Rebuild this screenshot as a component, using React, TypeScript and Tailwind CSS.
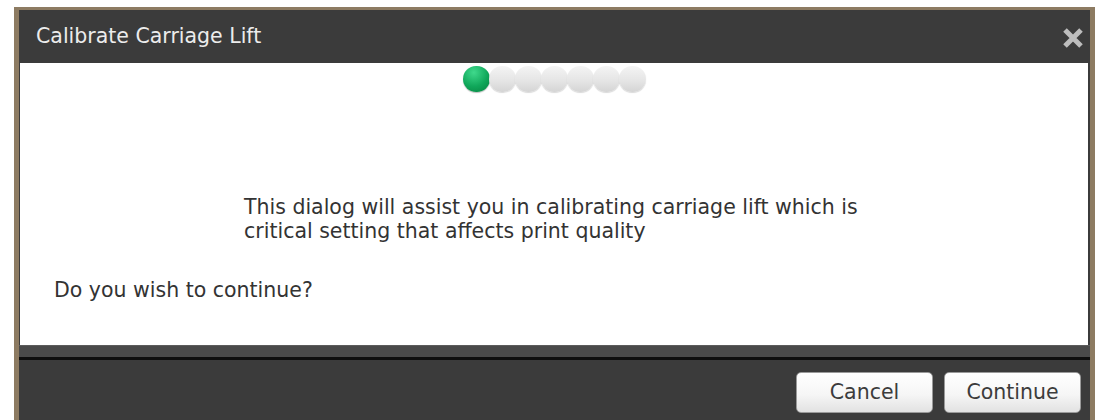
import React from "react";

const steps = [true, false, false, false, false, false, false];

const StepDot = ({ active }: { active: boolean }) => (
  <div
    className={
      active
        ? "w-[27px] h-[26px] -mr-[1px] rounded-full bg-[radial-gradient(circle_at_40%_25%,_#3fd98c_0%,_#10a75a_55%,_#07803f_100%)] shadow-[0_1px_1px_rgba(0,0,0,0.25)]"
        : "w-[27px] h-[26px] -mr-[1px] rounded-full bg-[linear-gradient(to_bottom,_#f4f4f4_0%,_#e4e4e4_60%,_#d4d4d4_100%)] shadow-[0_1px_1px_rgba(0,0,0,0.15)]"
    }
  />
);

const DialogButton = ({ label }: { label: string }) => (
  <button className="w-[137px] h-[41px] rounded-[5px] border border-[#9a9a9a] bg-[linear-gradient(to_bottom,_#ffffff_0%,_#f6f6f6_55%,_#e2e2e2_100%)] text-[20.5px] text-[#3c3c3c]">
    {label}
  </button>
);

export default function App() {
  return (
    <div
      className="w-[1096px] h-[420px] overflow-hidden bg-white pt-[7px] pl-[14px] pr-[1px]"
      style={{ fontFamily: '"DejaVu Sans", "Liberation Sans", sans-serif' }}
    >
      <div className="h-[440px] border-l-[5px] border-t-[3px] border-r-[5px] border-[#8d7b62] bg-[#3b3b3b] flex flex-col">
        {/* title bar */}
        <div className="h-[53px] flex items-center justify-between pl-[17px] pr-[6px]">
          <span className="text-[20.5px] text-[#ececec]">Calibrate Carriage Lift</span>
          <svg width="22" height="22" viewBox="0 0 22 22" className="mt-[2px]">
            <path d="M3 3 L19 19 M19 3 L3 19" stroke="#bdbdbd" strokeWidth="5" strokeLinecap="butt" />
          </svg>
        </div>

        {/* body */}
        <div className="h-[282px] ml-[1px] mr-[2px] bg-white flex flex-col">
          <div className="flex justify-center pt-[3px]">
            {steps.map((on, i) => (
              <StepDot key={i} active={on} />
            ))}
          </div>
          <p className="mt-[103px] ml-[224px] w-[650px] text-[20.5px] leading-[24px] text-[#333333]">
            This dialog will assist you in calibrating carriage lift which is critical setting that
            affects print quality
          </p>
          <p className="mt-[32px] ml-[34px] text-[20.5px] text-[#333333]">Do you wish to continue?</p>
        </div>

        {/* separator */}
        <div className="h-[12px] bg-[#4a4a4a] border-t border-[#5c5c5c]" />
        <div className="h-[3px] bg-[#0e0e0e]" />

        {/* footer */}
        <div className="flex justify-end gap-[11px] pt-[12px] pr-[9px]">
          <DialogButton label="Cancel" />
          <DialogButton label="Continue" />
        </div>
      </div>
    </div>
  );
}
